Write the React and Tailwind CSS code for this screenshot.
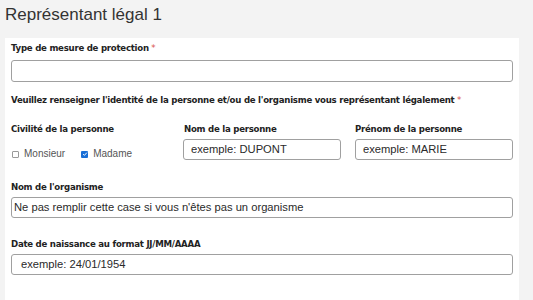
import React from 'react'

const Label = ({ children, required, className = '' }) => (
  <p
    className={`text-[8.6px] font-bold leading-[12px] text-[#222] tracking-[-0.25px] font-['DejaVu_Sans',sans-serif] ${className}`}
  >
    {children}
    {required && <span className="text-[#d9534f] font-normal"> *</span>}
  </p>
)

const Field = ({ value, className = '', pad = 'pl-[7px]' }) => (
  <div
    className={`h-[21px] border border-[#a0a0a0] rounded-[3px] bg-white flex items-center ${pad} text-[11.2px] text-[#2a2a2a] font-['Liberation_Sans',Arial,sans-serif] ${className}`}
  >
    {value}
  </div>
)

const Check = ({ checked }) =>
  checked ? (
    <span className="w-[7px] h-[7px] rounded-[1px] bg-[#1a6fd6] flex items-center justify-center">
      <svg viewBox="0 0 8 8" className="w-[6px] h-[6px]">
        <path d="M1.5 4.2 L3.2 5.8 L6.5 2.2" stroke="white" strokeWidth="1.3" fill="none" />
      </svg>
    </span>
  ) : (
    <span className="w-[7px] h-[7px] rounded-[1px] border border-[#9a9a9a] bg-white" />
  )

export default function App() {
  return (
    <div className="min-h-[300px] bg-[#f3f3f3] px-[5px] pt-[4px] font-['Liberation_Sans',Arial,sans-serif]">
      <h1 className="text-[17px] leading-[22px] text-[#333]">Représentant légal 1</h1>

      <div className="mt-[12px] w-[514px] bg-white px-[6px] pt-[4px] pb-[30px]">
        <Label required>Type de mesure de protection</Label>
        <Field value="" className="mt-[6px] h-[22px] border-[#888]" />

        <Label required className="mt-[12px]">
          Veuillez renseigner l'identité de la personne et/ou de l'organisme vous représentant légalement
        </Label>

        <div className="mt-[17px] grid grid-cols-[158px_158px_158px] gap-x-[14px]">
          <div>
            <Label>Civilité de la personne</Label>
            <div className="mt-[13px] flex items-center text-[10px] leading-[12px] text-[#555]">
              <span className="ml-[1px] flex items-center">
                <Check />
                <span className="ml-[5px]">Monsieur</span>
              </span>
              <span className="ml-[16px] flex items-center">
                <Check checked />
                <span className="ml-[5px]">Madame</span>
              </span>
            </div>
          </div>
          <div>
            <Label className="ml-[1px]">Nom de la personne</Label>
            <Field value="exemple: DUPONT" className="mt-[4px]" />
          </div>
          <div>
            <Label>Prénom de la personne</Label>
            <Field value="exemple: MARIE" className="mt-[4px]" />
          </div>
        </div>

        <Label className="mt-[21px]">Nom de l'organisme</Label>
        <Field
          value="Ne pas remplir cette case si vous n'êtes pas un organisme"
          pad="pl-[2px]"
          className="mt-[4px]"
        />

        <Label className="mt-[20px]">Date de naissance au format JJ/MM/AAAA</Label>
        <Field value="exemple: 24/01/1954" pad="pl-[9px]" className="mt-[4px]" />
      </div>
    </div>
  )
}
